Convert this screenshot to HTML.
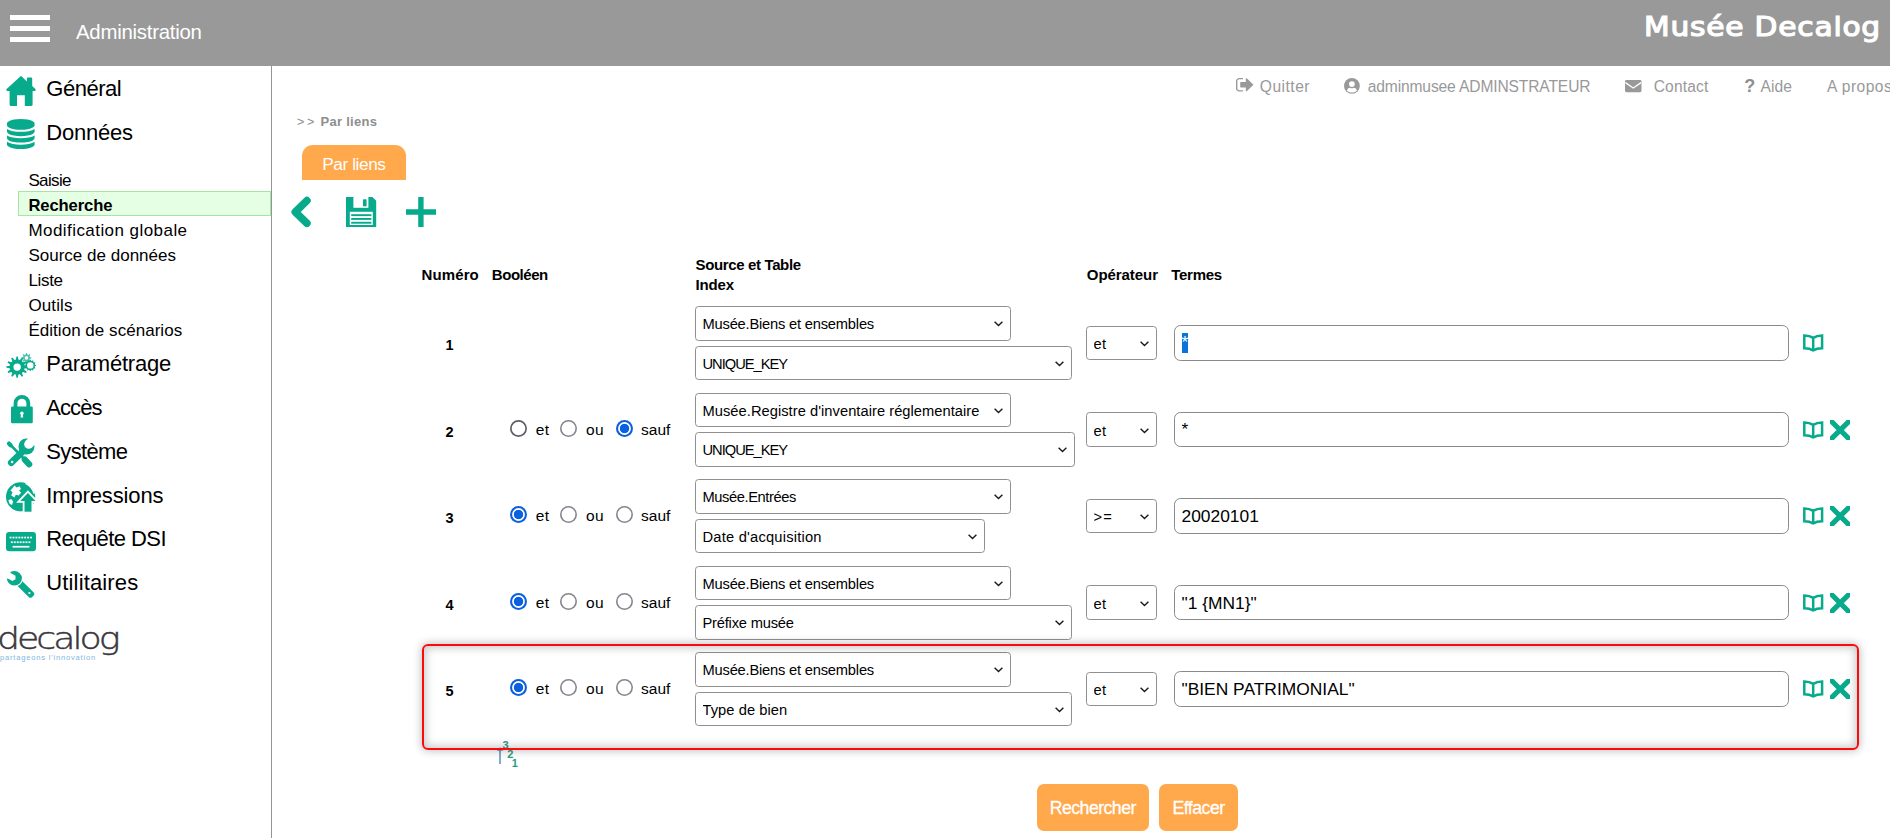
<!DOCTYPE html>
<html lang="fr"><head><meta charset="utf-8"><title>Musée Decalog - Administration</title>
<style>
*{box-sizing:border-box;margin:0;padding:0}
html,body{width:1890px;height:838px;overflow:hidden;background:#fff}
body{position:relative;font-family:"Liberation Sans",sans-serif;color:#000}
.t{position:absolute;white-space:pre;line-height:1}
header{position:absolute;left:0;top:0;width:1890px;height:65.5px;background:#999}
.burger{position:absolute;left:10px;top:15px;width:39.5px;height:27px}
.burger i{position:absolute;left:0;width:100%;height:5px;background:#fff}
nav{position:absolute;left:0;top:65px;width:272px;height:773px;border-right:1px solid #959595}
nav ul{list-style:none}
nav svg,.ic{position:absolute;overflow:visible}
.sel{position:absolute;left:18px;top:191px;width:253px;height:24.5px;background:#e5ffe5;border:1px solid #a3e6a3}
.tab{position:absolute;left:302px;top:145px;width:104px;height:35px;background:#ffa84c;border-radius:11px 11px 0 0}
.row{position:absolute;left:0;width:1890px;height:80px}
select,input[type=text]{position:absolute;font-family:"Liberation Sans",sans-serif;background:#fff;color:#000;-webkit-appearance:none;appearance:none;outline:none}
select{height:34px;border:1px solid #8f8f8f;border-radius:3.6px;padding:1px 0 0 6.5px;font-size:14.7px}
input[type=text]{left:1174px;width:615px;height:35.6px;border:1px solid #8a8a8a;border-radius:6.5px;padding:1px 0 0 6.5px;font-size:17.4px}
input[type=radio]{position:absolute;-webkit-appearance:none;appearance:none;width:17px;height:17px;border-radius:50%;border:0;box-shadow:inset 0 0 0 1.6px #858590;background:#fff}
input[type=radio].dk{box-shadow:inset 0 0 0 1.7px #5f5f68}
input[type=radio]:checked{box-shadow:inset 0 0 0 2.1px #0b60df;background:radial-gradient(circle,#0b60df 0,#0b60df 4.3px,#fff 5.1px)}
.btn{position:absolute;top:784px;height:47px;background:#ffa84c;border-radius:7px;border:0}
.hl{position:absolute;left:1182px;top:27px;width:6px;height:20.3px;background:#0a74da}
.red{position:absolute;z-index:3;pointer-events:none;left:421.5px;top:644.3px;width:1437px;height:105.4px;border:2px solid #fe0a0a;border-radius:6px;box-shadow:0 0 9px 1px rgba(0,0,0,.24),inset 0 0 9px 2px rgba(0,0,0,.21)}
</style></head>
<body>
<header>
<div class="burger"><i style="top:0"></i><i style="top:11px"></i><i style="top:22px"></i></div>
<div class="t" style="left:76.00px;top:22px;font-size:20.4px;letter-spacing:-0.257px;color:#fff;">Administration</div>
<div class="t" style="left:1643.80px;top:13px;font-size:27px;letter-spacing:0.709px;color:#fff;font-family:'DejaVu Sans', sans-serif;-webkit-text-stroke:1.2px #fff;transform:scaleX(1.1);transform-origin:0 0;">Musée Decalog</div>
</header>
<nav>
<ul>
<li><div class="t" style="left:46.30px;top:13px;font-size:22px;letter-spacing:-0.483px;">Général</div></li>
<li><div class="t" style="left:46.30px;top:57px;font-size:22px;letter-spacing:-0.225px;">Données</div></li>
<li><div class="sel" style="top:126.0px"></div><ul>
<li><div class="t" style="left:28.40px;top:107px;font-size:17px;letter-spacing:-0.635px;">Saisie</div></li>
<li><div class="t" style="left:28.40px;top:133px;font-size:16.6px;letter-spacing:-0.107px;font-weight:700;">Recherche</div></li>
<li><div class="t" style="left:28.40px;top:157px;font-size:17px;letter-spacing:0.442px;">Modification globale</div></li>
<li><div class="t" style="left:28.40px;top:182px;font-size:17px;letter-spacing:0.009px;">Source de données</div></li>
<li><div class="t" style="left:28.40px;top:207px;font-size:17px;letter-spacing:-0.324px;">Liste</div></li>
<li><div class="t" style="left:28.40px;top:232px;font-size:17px;letter-spacing:0.139px;">Outils</div></li>
<li><div class="t" style="left:28.40px;top:257px;font-size:17px;letter-spacing:0.035px;">Édition de scénarios</div></li>
</ul></li>
<li><div class="t" style="left:46.30px;top:288px;font-size:22px;letter-spacing:-0.226px;">Paramétrage</div></li>
<li><div class="t" style="left:46.30px;top:332px;font-size:22px;letter-spacing:-0.944px;">Accès</div></li>
<li><div class="t" style="left:46.30px;top:376px;font-size:22px;letter-spacing:-0.656px;">Système</div></li>
<li><div class="t" style="left:46.30px;top:420px;font-size:22px;letter-spacing:-0.136px;">Impressions</div></li>
<li><div class="t" style="left:46.30px;top:463px;font-size:22px;letter-spacing:-0.570px;">Requête DSI</div></li>
<li><div class="t" style="left:46.30px;top:507px;font-size:22px;letter-spacing:0.139px;">Utilitaires</div></li>
</ul>
<svg class="ic" style="left:6px;top:11px;width:30px;height:30px" viewBox="0 0 30 30"><path d="M14.8 0 L0.4 13.2 Q-0.3 14.6 1.2 14.9 H3.6 V28.5 Q3.6 30 5.1 30 H11 V19.3 H18.8 V30 H25 Q26.6 30 26.6 28.5 V14.9 H28.8 Q30.3 14.6 29.6 13.2 L26.2 10.1 V2.6 Q26.2 1.6 25.2 1.6 H21.9 Q20.9 1.6 20.9 2.6 V5.4 L15.8 0.6 Q15.3 0 14.8 0Z" fill="#07ab8b"/></svg>
<svg class="ic" style="left:7.4px;top:53.8px;width:27.6px;height:30px" viewBox="128.0 0.0 1536.0 1792.0" preserveAspectRatio="none"><path fill="#07ab8b" d="M896 768q237 0 443-43t325-127v170q0 69-103 128t-280 93.500-385 34.500-385-34.500-280-93.500-103-128v-170q119 84 325 127t443 43zm0 768q237 0 443-43t325-127v170q0 69-103 128t-280 93.500-385 34.500-385-34.500-280-93.500-103-128v-170q119 84 325 127t443 43zm0-384q237 0 443-43t325-127v170q0 69-103 128t-280 93.500-385 34.500-385-34.500-280-93.500-103-128v-170q119 84 325 127t443 43zm0-1152q208 0 385 34.500t280 93.500 103 128v128q0 69-103 128t-280 93.500-385 34.500-385-34.500-280-93.500-103-128v-128q0-69 103-128t280-93.500 385-34.500z"/></svg>
<svg class="ic" style="left:5px;top:287px;width:32px;height:27px" viewBox="0 0 32 27"><path fill-rule="evenodd" fill="#07ab8b" opacity=".72" d="M22.34 9.30 L22.00 10.77 L21.00 10.77 L20.66 9.30 L19.69 8.90 L18.41 9.70 L17.70 8.99 L18.50 7.71 L18.10 6.74 L16.63 6.40 L16.63 5.40 L18.10 5.06 L18.50 4.09 L17.70 2.81 L18.41 2.10 L19.69 2.90 L20.66 2.50 L21.00 1.03 L22.00 1.03 L22.34 2.50 L23.31 2.90 L24.59 2.10 L25.30 2.81 L24.50 4.09 L24.90 5.06 L26.37 5.40 L26.37 6.40 L24.90 6.74 L24.50 7.71 L25.30 8.99 L24.59 9.70 L23.31 8.90Z M23.30 5.90 A1.8 1.8 0 1 0 19.70 5.90 A1.8 1.8 0 1 0 23.30 5.90Z"/><path fill-rule="evenodd" fill="#07ab8b" d="M13.38 22.60 L12.88 25.78 L11.42 25.78 L10.92 22.60 L9.46 22.21 L7.44 24.71 L6.18 23.98 L7.34 20.98 L6.27 19.91 L3.27 21.07 L2.54 19.81 L5.04 17.79 L4.65 16.33 L1.47 15.83 L1.47 14.37 L4.65 13.87 L5.04 12.41 L2.54 10.39 L3.27 9.13 L6.27 10.29 L7.34 9.22 L6.18 6.22 L7.44 5.49 L9.46 7.99 L10.92 7.60 L11.42 4.42 L12.88 4.42 L13.38 7.60 L14.84 7.99 L16.86 5.49 L18.12 6.22 L16.96 9.22 L18.03 10.29 L21.03 9.13 L21.76 10.39 L19.26 12.41 L19.65 13.87 L22.83 14.37 L22.83 15.83 L19.65 16.33 L19.26 17.79 L21.76 19.81 L21.03 21.07 L18.03 19.91 L16.96 20.98 L18.12 23.98 L16.86 24.71 L14.84 22.21Z M15.85 15.10 A3.7 3.7 0 1 0 8.45 15.10 A3.7 3.7 0 1 0 15.85 15.10Z"/><circle cx="25.3" cy="13.4" r="3.4" fill="#fff"/><path fill-rule="evenodd" fill="#07ab8b" d="M29.94 12.64 L30.99 13.01 L30.99 13.79 L29.94 14.16 L29.70 15.06 L30.42 15.91 L30.03 16.58 L28.94 16.38 L28.28 17.04 L28.48 18.13 L27.81 18.52 L26.96 17.80 L26.06 18.04 L25.69 19.09 L24.91 19.09 L24.54 18.04 L23.64 17.80 L22.79 18.52 L22.12 18.13 L22.32 17.04 L21.66 16.38 L20.57 16.58 L20.18 15.91 L20.90 15.06 L20.66 14.16 L19.61 13.79 L19.61 13.01 L20.66 12.64 L20.90 11.74 L20.18 10.89 L20.57 10.22 L21.66 10.42 L22.32 9.76 L22.12 8.67 L22.79 8.28 L23.64 9.00 L24.54 8.76 L24.91 7.71 L25.69 7.71 L26.06 8.76 L26.96 9.00 L27.81 8.28 L28.48 8.67 L28.28 9.76 L28.94 10.42 L30.03 10.22 L30.42 10.89 L29.70 11.74Z M28.50 13.40 A3.2 3.2 0 1 0 22.10 13.40 A3.2 3.2 0 1 0 28.50 13.40Z"/></svg>
<svg class="ic" style="left:11px;top:329.2px;width:21.8px;height:29.2px" viewBox="0 0 21.8 29.2"><path d="M4.5 14 V9.2 A6.4 6.4 0 0 1 17.3 9.2 V14" fill="none" stroke="#07ab8b" stroke-width="3.8"/><rect x="0" y="12.6" width="21.8" height="16.6" rx="1.2" fill="#07ab8b"/><circle cx="10.9" cy="19.3" r="1.7" fill="#fff"/><path d="M10 19.5 H11.8 L12.2 23.6 H9.6Z" fill="#fff"/></svg>
<svg class="ic" style="left:5px;top:371px;width:32px;height:32px" viewBox="0 0 32 32"><g fill="none" stroke="#07ab8b" stroke-linecap="round"><path d="M4 7.6 L5.6 9.3" stroke-width="4.2"/><path d="M5 8.4 L18 21.8" stroke-width="2.7"/><path d="M19.8 23.6 L24.2 28.3" stroke-width="6.2"/><path d="M6.3 26.7 L19.6 13.6" stroke-width="6.8"/></g><circle cx="21.5" cy="10.5" r="8" fill="#07ab8b"/><circle cx="23.7" cy="8.3" r="4.5" fill="#fff"/><path d="M20.52 5.12 L26.88 11.48 L33.88 4.48 L27.52 -1.88Z" fill="#fff"/><circle cx="7.1" cy="25.9" r="1.25" fill="#fff"/></svg>
<svg class="ic" style="left:6px;top:417px;width:30px;height:30px" viewBox="0 0 30 30"><circle cx="14.6" cy="14.8" r="14.6" fill="#07ab8b"/><path d="M6.4 6.2 L8.4 3.4 L10.8 5.6 L13.6 4.2 L15 7 L13 8.6 L15.2 10.8 L12.6 13.6 L9.8 12.8 L8.6 15.4 L5.2 13.6 L6.6 10.2 L4.4 8.6Z" fill="#fff"/><path d="M2.4 18.2 L5.2 17 L7.2 19.4 L6 23 L3.6 21.8Z" fill="#fff"/><path d="M19.6 1.2 Q26.4 4.4 28.2 11.6" fill="none" stroke="#fff" stroke-width="1.7"/><path d="M21.9 9.6 L31.6 19.8 H26.4 V31 H17.6 V19.8 H12.2Z" fill="#07ab8b" stroke="#fff" stroke-width="1.8" stroke-linejoin="miter"/><rect x="10" y="29.7" width="22" height="3" fill="#fff"/></svg>
<svg class="ic" style="left:6px;top:467px;width:30px;height:19.2px" viewBox="0 0 30 19.2"><rect width="30" height="19.2" rx="3.2" fill="#07ab8b"/><rect x="3.60" y="4.7" width="1.9" height="1.7" fill="#fff"/><rect x="6.53" y="4.7" width="1.9" height="1.7" fill="#fff"/><rect x="9.46" y="4.7" width="1.9" height="1.7" fill="#fff"/><rect x="12.39" y="4.7" width="1.9" height="1.7" fill="#fff"/><rect x="15.32" y="4.7" width="1.9" height="1.7" fill="#fff"/><rect x="18.25" y="4.7" width="1.9" height="1.7" fill="#fff"/><rect x="21.18" y="4.7" width="1.9" height="1.7" fill="#fff"/><rect x="24.11" y="4.7" width="1.9" height="1.7" fill="#fff"/><rect x="4.90" y="9.4" width="1.9" height="1.7" fill="#fff"/><rect x="7.83" y="9.4" width="1.9" height="1.7" fill="#fff"/><rect x="10.76" y="9.4" width="1.9" height="1.7" fill="#fff"/><rect x="13.69" y="9.4" width="1.9" height="1.7" fill="#fff"/><rect x="16.62" y="9.4" width="1.9" height="1.7" fill="#fff"/><rect x="19.55" y="9.4" width="1.9" height="1.7" fill="#fff"/><rect x="22.48" y="9.4" width="1.9" height="1.7" fill="#fff"/><rect x="6.6" y="13.9" width="16.8" height="1.7" fill="#fff"/></svg>
<svg class="ic" style="left:7.3px;top:505.79999999999995px;width:27.4px;height:26.8px" viewBox="85.0 128.0 1641.0 1643.0" preserveAspectRatio="none"><path fill="#07ab8b" transform="translate(1811.0 0) scale(-1 1)" d="M448 1472q0-26-19-45t-45-19-45 19-19 45 19 45 45 19 45-19 19-45zm644-420l-682 682q-37 37-90 37-52 0-91-37l-106-108q-38-36-38-90 0-53 38-91l681-681q39 98 114.500 173.500t173.500 114.500zm634-435q0 39-23 106-47 134-164.500 217.500t-258.500 83.500q-185 0-316.500-131.500t-131.500-316.500 131.500-316.500 316.500-131.500q58 0 121.500 16.500t107.500 46.500q16 11 16 28t-16 28l-293 169v224l193 107q5-3 79-48.500t135.500-81 70.500-35.500q15 0 23.500 10t8.500 25z"/></svg>
<div class="t" style="left:-2.70px;top:559px;font-size:30px;letter-spacing:-2.500px;color:#38383d;font-weight:200;font-family:'DejaVu Sans Light','DejaVu Sans',sans-serif;transform:scaleX(1.21);transform-origin:0 0;-webkit-text-stroke:.45px #38383d;">decalog</div>
<div class="t" style="left:0.00px;top:589px;font-size:7.6px;letter-spacing:0.788px;color:#7db9de;">partageons l'innovation</div>
</nav>
<main>
<svg class="ic" style="left:1236px;top:78.3px;width:17.2px;height:13.5px" viewBox="64.0 256.0 1568.0 1280.0" preserveAspectRatio="none"><path fill="#999" d="M704 1440q0 4 1 20t.5 26.500-3 23.500-10 19.500-20.500 6.500h-320q-119 0-203.500-84.500t-84.500-203.500v-704q0-119 84.500-203.500t203.500-84.500h320q13 0 22.500 9.500t9.500 22.500q0 4 1 20t.5 26.500-3 23.500-10 19.500-20.500 6.500h-320q-66 0-113 47t-47 113v704q0 66 47 113t113 47h312l11.500 1 11.500 3 8 5.500 7 9 2 13.500zm928-544q0 26-19 45l-544 544q-19 19-45 19t-45-19-19-45v-288h-448q-26 0-45-19t-19-45v-384q0-26 19-45t45-19h448v-288q0-26 19-45t45-19 45 19l544 544q19 19 19 45z"/></svg>
<div class="t" style="left:1259.80px;top:79px;font-size:15.6px;letter-spacing:0.486px;color:#999;">Quitter</div>
<svg class="ic" style="left:1344.2px;top:78.3px;width:15.8px;height:15.8px" viewBox="0 0 16 16"><circle cx="8" cy="8" r="8" fill="#999"/><circle cx="8" cy="6.1" r="2.9" fill="#fff"/><path d="M2.9 12.6 C3.4 10.6 5 9.9 6 9.9 C7.2 10.6 8.8 10.6 10 9.9 C11 9.9 12.6 10.6 13.1 12.6 C11.8 14 10 14.8 8 14.8 C6 14.8 4.2 14 2.9 12.6Z" fill="#fff"/></svg>
<div class="t" style="left:1367.70px;top:79px;font-size:15.6px;letter-spacing:-0.132px;color:#999;">adminmusee ADMINSTRATEUR</div>
<svg class="ic" style="left:1625px;top:80px;width:16.5px;height:12.2px" viewBox="0 0 16.5 12.2"><rect width="16.5" height="12.2" rx="1.4" fill="#999"/><path d="M0.4 2.6 L8.25 8 L16.1 2.6" fill="none" stroke="#fff" stroke-width="1.3"/></svg>
<div class="t" style="left:1653.70px;top:79px;font-size:15.6px;letter-spacing:0.150px;color:#999;">Contact</div>
<div class="t" style="left:1744.30px;top:77px;font-size:18px;color:#8f8f8f;font-weight:700;">?</div>
<div class="t" style="left:1760.40px;top:79px;font-size:15.6px;letter-spacing:0.095px;color:#999;">Aide</div>
<div class="t" style="left:1827.00px;top:79px;font-size:15.6px;letter-spacing:0.450px;color:#999;">A propos</div>
<div class="t" style="left:297.00px;top:116px;font-size:12.5px;letter-spacing:2.695px;color:#8c8c8c;">&gt;&gt;</div>
<div class="t" style="left:320.60px;top:115px;font-size:13px;letter-spacing:0.266px;color:#8e8e8e;font-weight:700;">Par liens</div>
<div class="tab"></div>
<div class="t" style="left:322.20px;top:156px;font-size:17.3px;letter-spacing:-0.428px;color:#fff;">Par liens</div>
<svg class="ic" style="left:290.3px;top:197px;width:20px;height:30px" viewBox="0 0 20 30"><path d="M16.9 3.6 L5.3 15 L16.9 26.3" fill="none" stroke="#07ab8b" stroke-width="7.6" stroke-linecap="round" stroke-linejoin="round"/></svg>
<svg class="ic" style="left:346px;top:197px;width:30.2px;height:30px" viewBox="0 0 30.2 30"><path d="M0 0 H26.4 L30.2 3.8 V30 H0Z" fill="#07ab8b"/><rect x="7.4" y="0" width="15" height="10.8" fill="#fff"/><rect x="17" y="2.3" width="3.6" height="7" fill="#07ab8b"/><rect x="3.8" y="14.8" width="23" height="13.2" fill="#fff"/><rect x="5.2" y="17.2" width="20.2" height="1.9" fill="#07ab8b"/><rect x="5.2" y="21" width="20.2" height="1.9" fill="#07ab8b"/><rect x="5.2" y="24.8" width="20.2" height="1.9" fill="#07ab8b"/></svg>
<svg class="ic" style="left:406px;top:197px;width:30px;height:30px" viewBox="0 0 30 30"><path d="M12.2 0 H17.6 V12.2 H30 V17.8 H17.6 V30 H12.2 V17.8 H0 V12.2 H12.2Z" fill="#07ab8b"/></svg>
<div class="t" style="left:421.60px;top:267px;font-size:15px;letter-spacing:0.102px;font-weight:700;">Numéro</div>
<div class="t" style="left:491.80px;top:267px;font-size:15px;letter-spacing:-0.455px;font-weight:700;">Booléen</div>
<div class="t" style="left:695.60px;top:257px;font-size:15px;letter-spacing:-0.366px;font-weight:700;">Source et Table</div>
<div class="t" style="left:695.60px;top:277px;font-size:15px;letter-spacing:-0.158px;font-weight:700;">Index</div>
<div class="t" style="left:1086.80px;top:267px;font-size:15px;letter-spacing:-0.056px;font-weight:700;">Opérateur</div>
<div class="t" style="left:1171.30px;top:267px;font-size:15px;letter-spacing:-0.294px;font-weight:700;">Termes</div>
<div class="red"></div>
<section class="row" style="top:306px">
<div class="t" style="left:445.60px;top:32px;font-size:14.5px;font-weight:700;">1</div>
<select style="left:695px;top:0px;width:316px;height:35px;letter-spacing:-0.202px"><option>Musée.Biens et ensembles</option></select>
<svg class="ic" style="left:994.2px;top:14.499999999999998px;width:9px;height:6px" viewBox="0 0 9 6"><path d="M0.6 0.7 L4.5 4.6 L8.4 0.7" fill="none" stroke="#1a1a1a" stroke-width="1.4"/></svg>
<select style="left:695px;top:40px;width:377.0px;height:34px;letter-spacing:-1.009px"><option>UNIQUE_KEY</option></select>
<svg class="ic" style="left:1055.2px;top:54.6px;width:9px;height:6px" viewBox="0 0 9 6"><path d="M0.6 0.7 L4.5 4.6 L8.4 0.7" fill="none" stroke="#1a1a1a" stroke-width="1.4"/></svg>
<select style="left:1086px;top:20px;width:71px;height:34px;letter-spacing:0.3px"><option>et</option></select>
<svg class="ic" style="left:1140.2px;top:34.5px;width:9px;height:6px" viewBox="0 0 9 6"><path d="M0.6 0.7 L4.5 4.6 L8.4 0.7" fill="none" stroke="#1a1a1a" stroke-width="1.4"/></svg>
<input type="text" style="top:19px;height:36px;" value="*">
<div class="hl"></div>
<div class="t" style="left:1181.50px;top:28px;font-size:17.4px;color:#fff;">*</div>
<svg class="ic" style="left:1802.8px;top:27.7px;width:20.4px;height:17.4px" viewBox="0 0 20.4 17.4"><path d="M1.3 1.4 C4.5 1.4 7.6 2.1 10.2 3.9 C12.8 2.1 15.9 1.4 19.1 1.4 V14.2 C15.9 14.2 12.8 14.8 10.2 16.4 C7.6 14.8 4.5 14.2 1.3 14.2Z M10.2 3.9 V16.4" fill="none" stroke="#07ab8b" stroke-width="2.5" stroke-linejoin="miter"/></svg>
</section>
<section class="row" style="top:393px">
<div class="t" style="left:445.60px;top:32px;font-size:14.5px;font-weight:700;">2</div>
<input type="radio" class="dk" name="b2" style="left:510px;top:27px">
<div class="t" style="left:535.70px;top:29px;font-size:15.5px;letter-spacing:0.331px;">et</div>
<input type="radio" name="b2" style="left:560px;top:27px">
<div class="t" style="left:586.00px;top:29px;font-size:15.5px;letter-spacing:0.275px;">ou</div>
<input type="radio" name="b2" style="left:616px;top:27px" checked>
<div class="t" style="left:641.00px;top:29px;font-size:15.5px;letter-spacing:0.022px;">sauf</div>
<select style="left:695px;top:0px;width:316px;height:34px;letter-spacing:0.037px"><option>Musée.Registre d'inventaire réglementaire</option></select>
<svg class="ic" style="left:994.2px;top:14.499999999999998px;width:9px;height:6px" viewBox="0 0 9 6"><path d="M0.6 0.7 L4.5 4.6 L8.4 0.7" fill="none" stroke="#1a1a1a" stroke-width="1.4"/></svg>
<select style="left:695px;top:39px;width:380.0px;height:35px;letter-spacing:-1.009px"><option>UNIQUE_KEY</option></select>
<svg class="ic" style="left:1058.2px;top:53.6px;width:9px;height:6px" viewBox="0 0 9 6"><path d="M0.6 0.7 L4.5 4.6 L8.4 0.7" fill="none" stroke="#1a1a1a" stroke-width="1.4"/></svg>
<select style="left:1086px;top:19px;width:71px;height:35px;padding-top:3px;letter-spacing:0.3px"><option>et</option></select>
<svg class="ic" style="left:1140.2px;top:34.5px;width:9px;height:6px" viewBox="0 0 9 6"><path d="M0.6 0.7 L4.5 4.6 L8.4 0.7" fill="none" stroke="#1a1a1a" stroke-width="1.4"/></svg>
<input type="text" style="top:19px;height:35px;padding:0 0 1px 6.5px;" value="*">
<svg class="ic" style="left:1802.8px;top:27.7px;width:20.4px;height:17.4px" viewBox="0 0 20.4 17.4"><path d="M1.3 1.4 C4.5 1.4 7.6 2.1 10.2 3.9 C12.8 2.1 15.9 1.4 19.1 1.4 V14.2 C15.9 14.2 12.8 14.8 10.2 16.4 C7.6 14.8 4.5 14.2 1.3 14.2Z M10.2 3.9 V16.4" fill="none" stroke="#07ab8b" stroke-width="2.5" stroke-linejoin="miter"/></svg>
<svg class="ic" style="left:1829.8px;top:27.2px;width:20.3px;height:20.2px;overflow:hidden" viewBox="0 0 20.3 20.2"><path d="M-2 -2 L22.3 22.2 M22.3 -2 L-2 22.2" stroke="#07ab8b" stroke-width="5.1" fill="none"/></svg>
</section>
<section class="row" style="top:479px">
<div class="t" style="left:445.60px;top:32px;font-size:14.5px;font-weight:700;">3</div>
<input type="radio" name="b3" style="left:510px;top:27px" checked>
<div class="t" style="left:535.70px;top:29px;font-size:15.5px;letter-spacing:0.331px;">et</div>
<input type="radio" name="b3" style="left:560px;top:27px">
<div class="t" style="left:586.00px;top:29px;font-size:15.5px;letter-spacing:0.275px;">ou</div>
<input type="radio" name="b3" style="left:616px;top:27px">
<div class="t" style="left:641.00px;top:29px;font-size:15.5px;letter-spacing:0.022px;">sauf</div>
<select style="left:695px;top:0px;width:316px;height:35px;letter-spacing:-0.415px"><option>Musée.Entrées</option></select>
<svg class="ic" style="left:994.2px;top:14.499999999999998px;width:9px;height:6px" viewBox="0 0 9 6"><path d="M0.6 0.7 L4.5 4.6 L8.4 0.7" fill="none" stroke="#1a1a1a" stroke-width="1.4"/></svg>
<select style="left:695px;top:40px;width:290.0px;height:34px;letter-spacing:0.206px"><option>Date d'acquisition</option></select>
<svg class="ic" style="left:968.2px;top:54.6px;width:9px;height:6px" viewBox="0 0 9 6"><path d="M0.6 0.7 L4.5 4.6 L8.4 0.7" fill="none" stroke="#1a1a1a" stroke-width="1.4"/></svg>
<select style="left:1086px;top:20px;width:71px;height:34px;letter-spacing:1.2px"><option>&gt;=</option></select>
<svg class="ic" style="left:1140.2px;top:34.5px;width:9px;height:6px" viewBox="0 0 9 6"><path d="M0.6 0.7 L4.5 4.6 L8.4 0.7" fill="none" stroke="#1a1a1a" stroke-width="1.4"/></svg>
<input type="text" style="top:19px;height:36px;" value="20020101">
<svg class="ic" style="left:1802.8px;top:27.7px;width:20.4px;height:17.4px" viewBox="0 0 20.4 17.4"><path d="M1.3 1.4 C4.5 1.4 7.6 2.1 10.2 3.9 C12.8 2.1 15.9 1.4 19.1 1.4 V14.2 C15.9 14.2 12.8 14.8 10.2 16.4 C7.6 14.8 4.5 14.2 1.3 14.2Z M10.2 3.9 V16.4" fill="none" stroke="#07ab8b" stroke-width="2.5" stroke-linejoin="miter"/></svg>
<svg class="ic" style="left:1829.8px;top:27.2px;width:20.3px;height:20.2px;overflow:hidden" viewBox="0 0 20.3 20.2"><path d="M-2 -2 L22.3 22.2 M22.3 -2 L-2 22.2" stroke="#07ab8b" stroke-width="5.1" fill="none"/></svg>
</section>
<section class="row" style="top:566px">
<div class="t" style="left:445.60px;top:32px;font-size:14.5px;font-weight:700;">4</div>
<input type="radio" name="b4" style="left:510px;top:27px" checked>
<div class="t" style="left:535.70px;top:29px;font-size:15.5px;letter-spacing:0.331px;">et</div>
<input type="radio" name="b4" style="left:560px;top:27px">
<div class="t" style="left:586.00px;top:29px;font-size:15.5px;letter-spacing:0.275px;">ou</div>
<input type="radio" name="b4" style="left:616px;top:27px">
<div class="t" style="left:641.00px;top:29px;font-size:15.5px;letter-spacing:0.022px;">sauf</div>
<select style="left:695px;top:0px;width:316px;height:34px;letter-spacing:-0.202px"><option>Musée.Biens et ensembles</option></select>
<svg class="ic" style="left:994.2px;top:14.499999999999998px;width:9px;height:6px" viewBox="0 0 9 6"><path d="M0.6 0.7 L4.5 4.6 L8.4 0.7" fill="none" stroke="#1a1a1a" stroke-width="1.4"/></svg>
<select style="left:695px;top:39px;width:377.0px;height:35px;letter-spacing:-0.207px"><option>Préfixe musée</option></select>
<svg class="ic" style="left:1055.2px;top:53.6px;width:9px;height:6px" viewBox="0 0 9 6"><path d="M0.6 0.7 L4.5 4.6 L8.4 0.7" fill="none" stroke="#1a1a1a" stroke-width="1.4"/></svg>
<select style="left:1086px;top:19px;width:71px;height:35px;padding-top:3px;letter-spacing:0.3px"><option>et</option></select>
<svg class="ic" style="left:1140.2px;top:34.5px;width:9px;height:6px" viewBox="0 0 9 6"><path d="M0.6 0.7 L4.5 4.6 L8.4 0.7" fill="none" stroke="#1a1a1a" stroke-width="1.4"/></svg>
<input type="text" style="top:19px;height:35px;" value="&quot;1 {MN1}&quot;">
<svg class="ic" style="left:1802.8px;top:27.7px;width:20.4px;height:17.4px" viewBox="0 0 20.4 17.4"><path d="M1.3 1.4 C4.5 1.4 7.6 2.1 10.2 3.9 C12.8 2.1 15.9 1.4 19.1 1.4 V14.2 C15.9 14.2 12.8 14.8 10.2 16.4 C7.6 14.8 4.5 14.2 1.3 14.2Z M10.2 3.9 V16.4" fill="none" stroke="#07ab8b" stroke-width="2.5" stroke-linejoin="miter"/></svg>
<svg class="ic" style="left:1829.8px;top:27.2px;width:20.3px;height:20.2px;overflow:hidden" viewBox="0 0 20.3 20.2"><path d="M-2 -2 L22.3 22.2 M22.3 -2 L-2 22.2" stroke="#07ab8b" stroke-width="5.1" fill="none"/></svg>
</section>
<section class="row" style="top:652px">
<div class="t" style="left:445.60px;top:32px;font-size:14.5px;font-weight:700;">5</div>
<input type="radio" name="b5" style="left:510px;top:27px" checked>
<div class="t" style="left:535.70px;top:29px;font-size:15.5px;letter-spacing:0.331px;">et</div>
<input type="radio" name="b5" style="left:560px;top:27px">
<div class="t" style="left:586.00px;top:29px;font-size:15.5px;letter-spacing:0.275px;">ou</div>
<input type="radio" name="b5" style="left:616px;top:27px">
<div class="t" style="left:641.00px;top:29px;font-size:15.5px;letter-spacing:0.022px;">sauf</div>
<select style="left:695px;top:0px;width:316px;height:35px;letter-spacing:-0.202px"><option>Musée.Biens et ensembles</option></select>
<svg class="ic" style="left:994.2px;top:14.499999999999998px;width:9px;height:6px" viewBox="0 0 9 6"><path d="M0.6 0.7 L4.5 4.6 L8.4 0.7" fill="none" stroke="#1a1a1a" stroke-width="1.4"/></svg>
<select style="left:695px;top:40px;width:377.0px;height:34px;letter-spacing:0.058px"><option>Type de bien</option></select>
<svg class="ic" style="left:1055.2px;top:54.6px;width:9px;height:6px" viewBox="0 0 9 6"><path d="M0.6 0.7 L4.5 4.6 L8.4 0.7" fill="none" stroke="#1a1a1a" stroke-width="1.4"/></svg>
<select style="left:1086px;top:20px;width:71px;height:34px;letter-spacing:0.3px"><option>et</option></select>
<svg class="ic" style="left:1140.2px;top:34.5px;width:9px;height:6px" viewBox="0 0 9 6"><path d="M0.6 0.7 L4.5 4.6 L8.4 0.7" fill="none" stroke="#1a1a1a" stroke-width="1.4"/></svg>
<input type="text" style="top:19px;height:36px;" value="&quot;BIEN PATRIMONIAL&quot;">
<svg class="ic" style="left:1802.8px;top:27.7px;width:20.4px;height:17.4px" viewBox="0 0 20.4 17.4"><path d="M1.3 1.4 C4.5 1.4 7.6 2.1 10.2 3.9 C12.8 2.1 15.9 1.4 19.1 1.4 V14.2 C15.9 14.2 12.8 14.8 10.2 16.4 C7.6 14.8 4.5 14.2 1.3 14.2Z M10.2 3.9 V16.4" fill="none" stroke="#07ab8b" stroke-width="2.5" stroke-linejoin="miter"/></svg>
<svg class="ic" style="left:1829.8px;top:27.2px;width:20.3px;height:20.2px;overflow:hidden" viewBox="0 0 20.3 20.2"><path d="M-2 -2 L22.3 22.2 M22.3 -2 L-2 22.2" stroke="#07ab8b" stroke-width="5.1" fill="none"/></svg>
</section>
<svg class="ic" style="left:495px;top:745px;width:12px;height:22px" viewBox="0 0 12 22"><path d="M5 5 V19" fill="none" stroke="#86a9d2" stroke-width="2"/><path d="M1.8 5.8 L5 2.2 L8.2 5.8Z" fill="#6f8fb4"/></svg>
<div class="t" style="left:502.40px;top:740px;font-size:11px;color:#2c9c86;font-weight:700;">3</div>
<div class="t" style="left:507.20px;top:749px;font-size:11px;color:#2c9c86;font-weight:700;">2</div>
<div class="t" style="left:511.80px;top:758px;font-size:11px;color:#2c9c86;font-weight:700;">1</div>
<button class="btn" style="left:1037px;width:112px"></button>
<div class="t" style="left:1049.80px;top:800px;font-size:17.7px;letter-spacing:-0.544px;color:#fff;-webkit-text-stroke:.3px #fff;">Rechercher</div>
<button class="btn" style="left:1159px;width:79px"></button>
<div class="t" style="left:1172.40px;top:800px;font-size:17.7px;letter-spacing:-0.488px;color:#fff;-webkit-text-stroke:.3px #fff;">Effacer</div>
</main>
</body></html>
